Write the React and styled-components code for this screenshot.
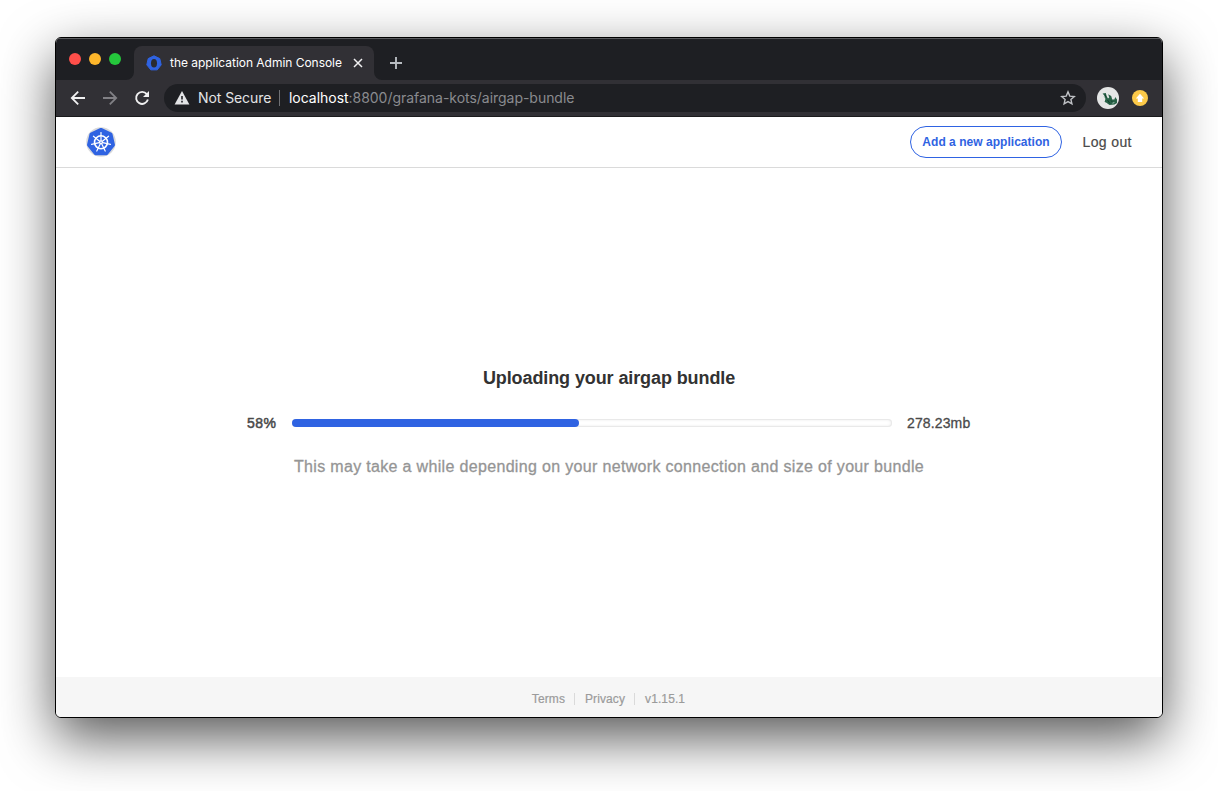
import React from "react";
import styled, { createGlobalStyle } from "styled-components";

const GlobalStyle = createGlobalStyle`
  * { box-sizing: border-box; }
  body {
    margin: 0;
    background: #fff;
    font-family: "Liberation Sans", Helvetica, Arial, sans-serif;
    overflow: hidden;
  }
`;

const Desktop = styled.div`
  height: 791px;
  padding: 37px 55px 73px;
  background: #fff;
`;

const Window = styled.div`
  display: flex;
  flex-direction: column;
  height: 681px;
  border: 1px solid #000;
  border-radius: 6px;
  overflow: hidden;
  background: #fff;
  box-shadow: 0 20px 54px rgba(0, 0, 0, 0.66);
`;

const TabStrip = styled.div`
  display: flex;
  align-items: flex-end;
  height: 42px;
  background: #1e1f23;
  box-shadow: inset 0 1px 0 #5b5c5f;
  padding-left: 13px;
  font-family: Inter, sans-serif;
`;

const Lights = styled.div`
  display: flex;
  gap: 8px;
  width: 65px;
  padding-bottom: 15px;
`;

const Light = styled.span`
  width: 12px;
  height: 12px;
  border-radius: 50%;
  background: ${(p) => p.$color};
`;

const TabCorner = styled.svg`
  display: block;
  width: 8px;
  height: 8px;
  margin-left: ${(p) => (p.$left ? "-8px" : 0)};
  fill: #313035;
`;

const Tab = styled.div`
  display: flex;
  align-items: center;
  width: 240px;
  height: 34px;
  padding: 0 10px 0 12px;
  border-radius: 8px 8px 0 0;
  background: #313035;
`;

const TabTitle = styled.span`
  flex: 1;
  margin-left: 8px;
  color: #fff;
  font-size: 12px;
  line-height: 16px;
  letter-spacing: -0.03px;
  white-space: nowrap;
`;

const NewTab = styled.div`
  display: flex;
  width: 12px;
  height: 34px;
  align-items: center;
  margin-left: 8px;
`;

const Toolbar = styled.div`
  display: flex;
  align-items: center;
  height: 37px;
  padding: 0 14px 1px;
  background: #313035;
  border-bottom: 1px solid #1b1b1d;
`;

const NavIcons = styled.div`
  display: flex;
  gap: 16px;
  width: 94px;
`;

const Omnibox = styled.div`
  display: flex;
  align-items: center;
  width: 922px;
  height: 28px;
  padding: 0 10px;
  border-radius: 14px;
  background: #1e1f23;
  font-family: Inter, sans-serif;
  font-size: 14px;
  line-height: 20px;
  letter-spacing: -0.03px;
  color: #e3e4e6;
  white-space: nowrap;
`;

const Security = styled.span`
  margin-left: 8px;
  letter-spacing: -0.08px;
`;

const OmniDivider = styled.span`
  width: 1px;
  height: 16px;
  margin: 0 9px 0 auto;
  background: #707175;
`;

const SecurityGroup = styled.div`
  display: flex;
  align-items: center;
  width: 115px;
`;

const Url = styled.span`
  flex: 1;
  color: #8a8b8f;
`;

const Host = styled.span`
  color: #fff;
`;

const Extensions = styled.div`
  display: flex;
  align-items: center;
  gap: 13px;
  margin-left: 11px;
`;

const AppHeader = styled.header`
  display: flex;
  align-items: center;
  justify-content: space-between;
  height: 51px;
  padding: 0 30px;
  border-bottom: 1px solid #dadada;
`;

const HeaderActions = styled.div`
  display: flex;
  align-items: center;
`;

const AddButton = styled.button`
  width: 152px;
  height: 32px;
  padding: 0;
  border: 1px solid #2f63e2;
  border-radius: 16px;
  background: #fff;
  color: #2f63e2;
  font: bold 12px/16px "Liberation Sans", Helvetica, sans-serif;
  letter-spacing: 0.03px;
  white-space: nowrap;
`;

const LogOut = styled.span`
  width: 50px;
  margin-left: 20px;
  text-indent: 0.5px;
  color: #4a4a4a;
  font-size: 14px;
  line-height: 18px;
  letter-spacing: 0.38px;
  white-space: nowrap;
  -webkit-text-stroke: 0.2px;
`;

const Main = styled.main`
  display: flex;
  flex: 1;
  flex-direction: column;
  align-items: center;
  padding-top: 199px;
  white-space: nowrap;
`;

const Title = styled.h1`
  margin: 0;
  color: #323232;
  font-size: 18px;
  line-height: 22px;
  letter-spacing: -0.1px;
`;

const ProgressRow = styled.div`
  display: flex;
  align-items: center;
  width: 724px;
  margin: 25px 0;
  color: #4a4a4a;
  font-size: 14px;
  line-height: 18px;
  letter-spacing: 0.13px;
  -webkit-text-stroke: 0.3px;
`;

const Percent = styled.span`
  width: 45px;
  letter-spacing: 0.5px;
  -webkit-text-stroke: 0.5px;
`;

const Track = styled.div`
  width: 600px;
  height: 8px;
  border-radius: 4px;
  background: #fff;
  box-shadow: inset 0 0 0 1px #e9e9e9, inset 0 0 3px 1px #ececec;
`;

const Fill = styled.div`
  height: 8px;
  border-radius: 4px;
  background: #2f63e2;
`;

const Size = styled.span`
  margin-left: 15px;
`;

const Note = styled.p`
  margin: 0;
  color: #959595;
  font-size: 16px;
  line-height: 20px;
  letter-spacing: 0.33px;
  -webkit-text-stroke: 0.3px;
`;

const Footer = styled.footer`
  display: flex;
  align-items: center;
  justify-content: center;
  height: 40px;
  padding: 4px 2px 0 0;
  background: #f6f6f6;
  color: #9b9b9b;
  font-size: 12px;
  line-height: 12px;
  letter-spacing: 0.1px;
`;

const FooterItem = styled.span`
  padding: 0 9px 0 10px;
  -webkit-text-stroke: 0.2px;
  border-left: ${(p) => (p.$first ? "0" : "1px solid #dadada")};
`;

const heptagon = (cx, cy, r) =>
  Array.from({ length: 7 }, (_, i) => {
    const a = -Math.PI / 2 + (i * 2 * Math.PI) / 7;
    return `${(cx + r * Math.cos(a)).toFixed(2)},${(cy + r * Math.sin(a)).toFixed(2)}`;
  }).join(" ");

const spokes = Array.from({ length: 7 }, (_, i) => (i * 360) / 7);

const HelmLogo = () => (
  <svg width="30" height="30" viewBox="0 0 30 30">
    <circle cx="15" cy="15" r="14.8" fill="#d8d9dc" />
    <polygon points={heptagon(15, 15.2, 12.6)} fill="#2f63e2" stroke="#2f63e2" strokeWidth="3.4" strokeLinejoin="round" />
    <g stroke="#fff" fill="none" strokeLinecap="round">
      <circle cx="15" cy="15.3" r="6.5" strokeWidth="1.6" />
      {spokes.map((a) => (
        <path key={a} d="M15 13.5V5.6" strokeWidth="1.2" transform={`rotate(${a} 15 15.3)`} />
      ))}
    </g>
    <circle cx="15" cy="15.3" r="2" fill="#fff" />
    <circle cx="15" cy="15.3" r="0.7" fill="#2f63e2" />
  </svg>
);

const Favicon = () => (
  <svg width="16" height="16" viewBox="0 0 16 16">
    <polygon points={heptagon(8, 8.2, 7.4)} fill="#2f63e2" stroke="#2f63e2" strokeLinejoin="round" />
    <ellipse cx="8" cy="8.2" rx="3" ry="4.3" fill="#2a2b31" />
  </svg>
);

const NavIcon = ({ d, color = "#f0f0f1" }) => (
  <svg width="16" height="16" viewBox="0 0 16 16" fill="none" stroke={color} strokeWidth="1.8">
    <path d={d} />
  </svg>
);

const uploaded = 287;
const trackWidth = 600;

export default function App() {
  return (
    <>
      <GlobalStyle />
      <Desktop>
        <Window>
          <TabStrip>
            <Lights>
              <Light $color="#ff4f4a" />
              <Light $color="#fdb62b" />
              <Light $color="#25c73c" />
            </Lights>
            <TabCorner $left viewBox="0 0 8 8"><path d="M8 0V8H0A8 8 0 0 0 8 0Z" /></TabCorner>
            <Tab>
              <Favicon />
              <TabTitle>the application Admin Console</TabTitle>
              <svg width="12" height="12" viewBox="0 0 12 12" stroke="#f0f0f1" strokeWidth="1.5">
                <path d="M2 2l8 8M10 2l-8 8" />
              </svg>
            </Tab>
            <TabCorner viewBox="0 0 8 8"><path d="M0 0V8H8A8 8 0 0 1 0 0Z" /></TabCorner>
            <NewTab>
              <svg width="12" height="12" viewBox="0 0 12 12" stroke="#b8bcc1" strokeWidth="1.9">
                <path d="M6 0v12M0 6h12" />
              </svg>
            </NewTab>
          </TabStrip>
          <Toolbar>
            <NavIcons>
              <NavIcon d="M15 8H2.4M8.2 1.6L1.8 8L8.2 14.4" />
              <NavIcon d="M1 8H13.6M7.8 1.6L14.2 8L7.8 14.4" color="#818085" />
              <svg width="16" height="16" viewBox="0 0 16 16">
                <path d="M12.8 4.1A6 6 0 1 0 13.9 9.6" fill="none" stroke="#f0f0f1" strokeWidth="1.9" />
                <path d="M15 1V7H9Z" fill="#f0f0f1" />
              </svg>
            </NavIcons>
            <Omnibox>
              <SecurityGroup>
                <svg width="16" height="16" viewBox="0 0 16 16">
                  <path d="M8 1L15.4 14.4H0.6Z" fill="#e3e4e6" />
                  <path d="M8 6v3.6M8 10.8v1.8" stroke="#1e1f23" strokeWidth="1.6" />
                </svg>
                <Security>Not Secure</Security>
                <OmniDivider />
              </SecurityGroup>
              <Url><Host>localhost</Host>:8800/grafana-kots/airgap-bundle</Url>
              <svg width="16" height="16" viewBox="0 0 16 16" fill="none" stroke="#bfc1c5" strokeWidth="1.4">
                <path d="M8 1.9L9.8 6.1L14.3 6.5L10.9 9.5L11.9 13.9L8 11.6L4.1 13.9L5.1 9.5L1.7 6.5L6.2 6.1Z" />
              </svg>
            </Omnibox>
            <Extensions>
              <svg width="22" height="22" viewBox="0 0 22 22">
                <circle cx="11" cy="11" r="11" fill="#e5e6e6" />
                <path d="M5.6 6.6L8.8 6L9.8 9.4L11 11.4L12.2 10.6L11.2 7.2L14.2 9L15.2 12.4L17.4 12.6L18.2 10L20 12.4V16L17.5 17.6L12.5 18L9 15.5L7.6 15L8.4 12L7.2 8.6Z" fill="#286247" />
                <path d="M10.5 13l2.4 3.4M14 13.4l1.5 1.8M8 7.5l1.2 3" stroke="#103f2c" />
                <path d="M15.4 16.2l2-.6M7 9.5l1 1.6" stroke="#a9c6b7" />
              </svg>
              <svg width="16" height="16" viewBox="0 0 16 16">
                <circle cx="8" cy="8" r="8" fill="#fcc949" />
                <path d="M8 3.8L12.2 8.4H10.2V12H5.8V8.4H3.8Z" fill="#fff" />
              </svg>
            </Extensions>
          </Toolbar>
          <AppHeader>
            <HelmLogo />
            <HeaderActions>
              <AddButton>Add a new application</AddButton>
              <LogOut>Log out</LogOut>
            </HeaderActions>
          </AppHeader>
          <Main>
            <Title>Uploading your airgap bundle</Title>
            <ProgressRow>
              <Percent>58%</Percent>
              <Track>
                <Fill style={{ width: `${(uploaded / trackWidth) * 100}%` }} />
              </Track>
              <Size>278.23mb</Size>
            </ProgressRow>
            <Note>This may take a while depending on your network connection and size of your bundle</Note>
          </Main>
          <Footer>
            <FooterItem $first>Terms</FooterItem>
            <FooterItem>Privacy</FooterItem>
            <FooterItem>v1.15.1</FooterItem>
          </Footer>
        </Window>
      </Desktop>
    </>
  );
}
